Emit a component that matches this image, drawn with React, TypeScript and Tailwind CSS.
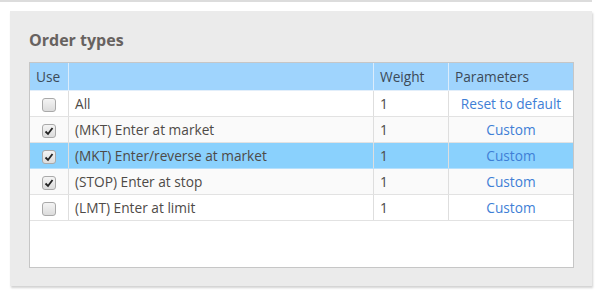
import React from "react";

type Row = {
  name: string;
  checked: boolean;
  weight: string;
  param: string;
  selected?: boolean;
  shade?: boolean;
};

const rows: Row[] = [
  { name: "All", checked: false, weight: "1", param: "Reset to default" },
  { name: "(MKT) Enter at market", checked: true, weight: "1", param: "Custom", shade: true },
  { name: "(MKT) Enter/reverse at market", checked: true, weight: "1", param: "Custom", selected: true },
  { name: "(STOP) Enter at stop", checked: true, weight: "1", param: "Custom", shade: true },
  { name: "(LMT) Enter at limit", checked: false, weight: "1", param: "Custom" },
];

const Checkbox = ({ checked }: { checked: boolean }) => (
  <div className="mt-[2px] flex h-[14px] w-[14px] items-end justify-center rounded-[3px] border border-[#a9a9a9] bg-gradient-to-b from-[#f4f4f4] to-[#dcdcdc]">
    {checked && (
      <svg width="10" height="10" viewBox="0 0 10 10" className="mb-[1px]">
        <path d="M1.5 5.5 L4 8 L8.5 2" fill="none" stroke="#222" strokeWidth="1.8" />
      </svg>
    )}
  </div>
);

export default function App() {
  return (
    <div
      className="h-[300px] w-[604px] bg-white"
      style={{ fontFamily: '"Open Sans", "Liberation Sans", sans-serif' }}
    >
      <div className="h-[2px] w-[592px] bg-[#dcdcdc]" />
      <div className="ml-[10px] mt-[9px] h-[275px] w-[582px] bg-[#ebebeb] pl-[19px] pt-[19px] shadow-[1px_2px_2px_rgba(0,0,0,0.18)]">
        <div className="h-[20px] text-[16px] font-bold leading-[20px] text-[#676260]">Order types</div>
        <div className="mt-[12px] h-[206px] w-[545px] border border-[#c6c6c6] bg-white text-[13.7px] text-[#4e4a47]">
          <div className="flex h-[28px] border-b border-[#e2eefa] bg-[#9fd4fd] leading-[27px] text-[#3c4a58]">
            <div className="w-[39px] border-r border-[#dbecfb] pl-[6px]">Use</div>
            <div className="w-[305px] border-r border-[#dbecfb]" />
            <div className="w-[75px] border-r border-[#dbecfb] pl-[6px]">Weight</div>
            <div className="flex-1 pl-[6px]">Parameters</div>
          </div>
          {rows.map((r, i) => (
            <div
              key={i}
              className={`flex h-[26px] border-b leading-[25px] ${
                r.selected
                  ? "border-[#b6e0fd] bg-[#8ad1fd]"
                  : r.shade
                  ? "border-[#e2e2e2] bg-[#fafafa]"
                  : "border-[#e2e2e2] bg-white"
              }`}
            >
              <div className="flex w-[39px] items-center justify-center border-r border-[#dedede]">
                <Checkbox checked={r.checked} />
              </div>
              <div className="w-[305px] border-r border-[#dedede] pl-[6px]">{r.name}</div>
              <div className="w-[75px] border-r border-[#dedede] pl-[6px]">{r.weight}</div>
              <div className="flex-1 text-center text-[#3f7fd6]">{r.param}</div>
            </div>
          ))}
        </div>
      </div>
    </div>
  );
}
